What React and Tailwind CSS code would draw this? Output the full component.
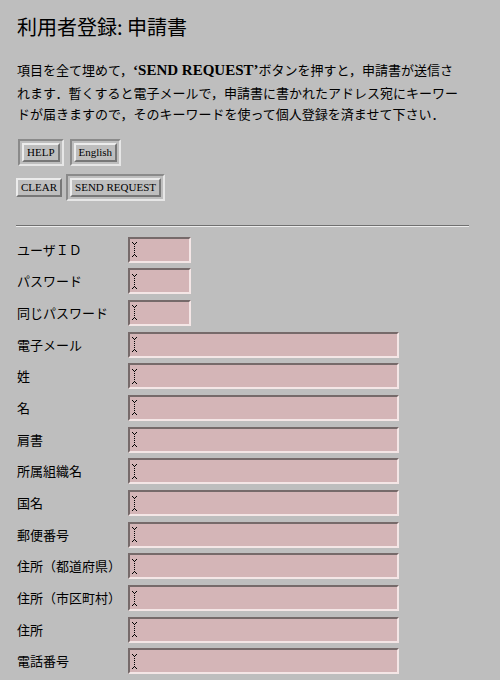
import React from "react";

const jp = { fontFamily: '"Noto Sans CJK JP", "Noto Sans", sans-serif' };

function Caret() {
  return (
    <svg width="5" height="15" viewBox="0 0 5 15" className="block">
      <rect x="0" y="0" width="1" height="1" fill="#000" />
      <rect x="4" y="0" width="1" height="1" fill="#000" />
      <rect x="1" y="1" width="1" height="1" fill="#000" />
      <rect x="3" y="1" width="1" height="1" fill="#000" />
      <rect x="2" y="2" width="1" height="1" fill="#000" />
      <rect x="2" y="4" width="1" height="1" fill="#000" />
      <rect x="2" y="6" width="1" height="1" fill="#000" />
      <rect x="2" y="8" width="1" height="1" fill="#000" />
      <rect x="2" y="10" width="1" height="1" fill="#000" />
      <rect x="2" y="12" width="1" height="1" fill="#000" />
      <rect x="1" y="13" width="1" height="1" fill="#000" />
      <rect x="3" y="13" width="1" height="1" fill="#000" />
      <rect x="0" y="14" width="1" height="1" fill="#000" />
      <rect x="4" y="14" width="1" height="1" fill="#000" />
    </svg>
  );
}

function Field({ wide }) {
  return (
    <div
      className={`h-[26px] ${wide ? "w-[271px]" : "w-[63px]"} bg-[#d4b5b7] border-2 border-t-[#766a6a] border-l-[#766a6a] border-b-[#f4e6e6] border-r-[#f4e6e6] flex items-center pl-[2px]`}
    >
      <Caret />
    </div>
  );
}

function Btn({ children, def }) {
  const inner = (
    <div
      className="bg-[#bebebe] border-2 border-t-[#ececec] border-l-[#ececec] border-b-[#777777] border-r-[#777777] px-[3px] h-[19px] flex items-center text-[11px] text-black"
      style={{ fontFamily: '"Liberation Serif", serif' }}
    >
      {children}
    </div>
  );
  if (!def) return inner;
  return (
    <div className="border-2 border-t-[#8a8a8a] border-l-[#8a8a8a] border-b-[#e6e6e6] border-r-[#e6e6e6] p-[2px]">
      {inner}
    </div>
  );
}

const rows = [
  ["ユーザＩＤ", false],
  ["パスワード", false],
  ["同じパスワード", false],
  ["電子メール", true],
  ["姓", true],
  ["名", true],
  ["肩書", true],
  ["所属組織名", true],
  ["国名", true],
  ["郵便番号", true],
  ["住所（都道府県）", true],
  ["住所（市区町村）", true],
  ["住所", true],
  ["電話番号", true],
];

export default function App() {
  return (
    <div className="min-h-[680px] bg-[#bebebe] pl-[16px] pt-[14px] text-black" style={jp}>
      <h1 className="text-[20px] leading-[26px] font-normal pl-[1px]">利用者登録: 申請書</h1>
      <p className="mt-[19px] text-[13px] leading-[21.5px] whitespace-nowrap pl-[1px]">
        項目を全て埋めて，
        <b className="text-[15px]" style={{ fontFamily: '"Liberation Serif", serif' }}>
          ‘SEND REQUEST’
        </b>
        ボタンを押すと，申請書が送信さ
        <br />
        れます．暫くすると電子メールで，申請書に書かれたアドレス宛にキーワー
        <br />
        ドが届きますので，そのキーワードを使って個人登録を済ませて下さい．
      </p>
      <div className="mt-[14px] flex gap-[6px] pl-[2px]">
        <Btn def>HELP</Btn>
        <Btn def>English</Btn>
      </div>
      <div className="mt-[8px] flex items-center gap-[4px]">
        <Btn>CLEAR</Btn>
        <Btn def>SEND REQUEST</Btn>
      </div>
      <div className="mt-[24px] w-[453px] h-[2px] border-t border-t-[#707070] border-b border-b-[#ececec]" />
      <div className="mt-[10px] grid grid-cols-[112px_auto] gap-y-[5.7px] items-center">
        {rows.map(([label, wide]) => (
          <React.Fragment key={label}>
            <div className="text-[13px] leading-[26px] pl-[1px] whitespace-nowrap">{label}</div>
            <Field wide={wide} />
          </React.Fragment>
        ))}
      </div>
    </div>
  );
}
